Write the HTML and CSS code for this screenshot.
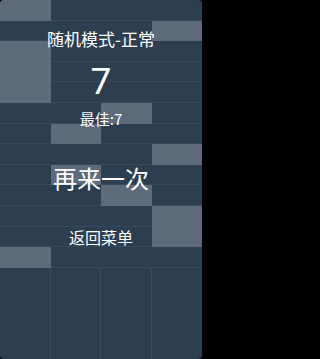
FILE: index.html
```html
<!DOCTYPE html>
<html lang="zh">
<head>
<meta charset="utf-8">
<title>随机模式-正常</title>
<link rel="stylesheet" href="styles.css">
</head>
<body>
<div class="screen">
  <div class="board">
    <div class="row"><div class="cell tile"></div><div class="cell"></div><div class="cell"></div><div class="cell"></div></div>
    <div class="row"><div class="cell"></div><div class="cell"></div><div class="cell"></div><div class="cell tile"></div></div>
    <div class="row"><div class="cell tile"></div><div class="cell"></div><div class="cell"></div><div class="cell"></div></div>
    <div class="row"><div class="cell tile"></div><div class="cell"></div><div class="cell"></div><div class="cell"></div></div>
    <div class="row"><div class="cell tile"></div><div class="cell"></div><div class="cell"></div><div class="cell"></div></div>
    <div class="row"><div class="cell"></div><div class="cell"></div><div class="cell tile"></div><div class="cell"></div></div>
    <div class="row"><div class="cell"></div><div class="cell tile"></div><div class="cell"></div><div class="cell"></div></div>
    <div class="row"><div class="cell"></div><div class="cell"></div><div class="cell"></div><div class="cell tile"></div></div>
    <div class="row"><div class="cell"></div><div class="cell tile"></div><div class="cell"></div><div class="cell"></div></div>
    <div class="row"><div class="cell"></div><div class="cell"></div><div class="cell tile"></div><div class="cell"></div></div>
    <div class="row"><div class="cell"></div><div class="cell"></div><div class="cell"></div><div class="cell tile"></div></div>
    <div class="row"><div class="cell"></div><div class="cell"></div><div class="cell"></div><div class="cell tile"></div></div>
    <div class="row"><div class="cell tile"></div><div class="cell"></div><div class="cell"></div><div class="cell"></div></div>
    <div class="lanes"><div class="lane"></div><div class="lane"></div><div class="lane"></div><div class="lane"></div></div>
  </div>
  <div class="overlay">
    <div class="mode">随机模式-正常</div>
    <div class="score">7</div>
    <div class="best">最佳:7</div>
    <div class="retry">再来一次</div>
    <div class="menu">返回菜单</div>
  </div>
</div>
</body>
</html>
```

FILE: styles.css
```css
html, body {
  margin: 0;
  padding: 0;
  background: #000;
  height: 100%;
}
.screen {
  position: relative;
  width: 202px;
  height: 359px;
  border-radius: 4px;
  overflow: hidden;
  background: #2c3e50;
  font-family: "Noto Sans CJK SC", "Noto Sans", sans-serif;
  color: #fff;
}
.board {
  display: flex;
  flex-direction: column;
  height: 100%;
}
.row {
  display: grid;
  grid-template-columns: repeat(4, 1fr);
  height: 20.6px;
  flex: none;
}
.cell {
  background: #2c3e50;
  box-shadow: inset 0 -1px 0 #38495b;
}
.cell.tile {
  background: #5e6b7a;
  box-shadow: none;
}
.lanes {
  flex: 1;
  display: grid;
  grid-template-columns: repeat(4, 1fr);
}
.lane {
  border-right: 1px solid #3b4c5e;
}
.lane:last-child {
  border-right: none;
}
.overlay {
  position: absolute;
  inset: 0;
  display: flex;
  flex-direction: column;
  align-items: center;
}
.mode {
  margin-top: 28px;
  font-size: 17px;
  line-height: 22px;
}
.score {
  margin-top: 14px;
  font-family: Roboto, "Liberation Sans", sans-serif;
  font-weight: 400;
  font-size: 37px;
  line-height: 36px;
}
.best {
  margin-top: 10px;
  font-size: 15px;
  line-height: 18px;
}
.retry {
  margin-top: 35px;
  font-size: 24px;
  line-height: 30px;
}
.menu {
  margin-top: 34px;
  font-size: 16px;
  line-height: 20px;
}
```
